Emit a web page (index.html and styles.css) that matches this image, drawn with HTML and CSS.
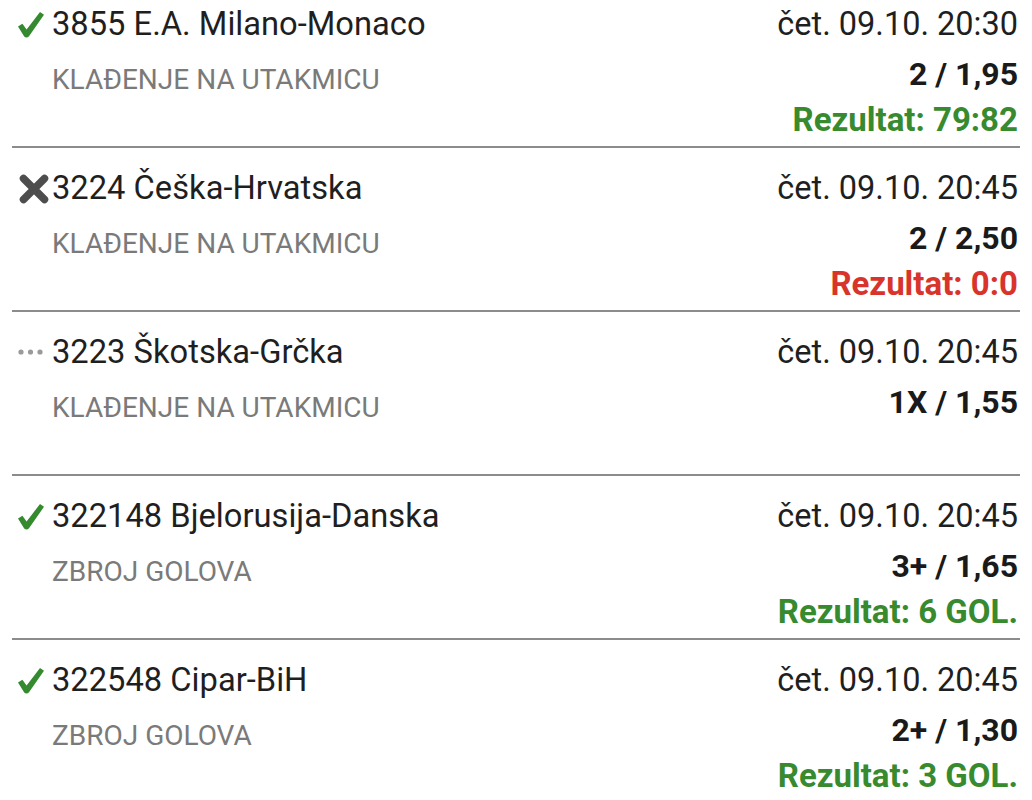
FILE: index.html
```html
<!DOCTYPE html>
<html lang="hr">
<head>
<meta charset="utf-8">
<title>Listić</title>
<link rel="stylesheet" href="styles.css">
</head>
<body>
<div class="list">

  <div class="row">
    <div class="left">
      <div class="title">
        <span class="icon"><svg class="ic-check" width="26" height="26" viewBox="0 0 26 26"><path d="M0 14.6 L4.4 11.8 L8.6 17.4 L22 0 L26 2.8 L11 24.2 Q8.6 26.8 6.2 24.4 Z" fill="#358a2f"/></svg></span>
        <span class="name">3855 E.A. Milano-Monaco</span>
      </div>
      <div class="sub">KLAĐENJE NA UTAKMICU</div>
    </div>
    <div class="right">
      <div class="date">čet. 09.10. 20:30</div>
      <div class="odds">2 / 1,95</div>
      <div class="res win">Rezultat: 79:82</div>
    </div>
  </div>
  <div class="divider"></div>

  <div class="row">
    <div class="left">
      <div class="title">
        <span class="icon"><svg class="ic-x" width="30" height="30" viewBox="0 0 30 30"><path d="M4.5 4.5 L25.5 25.5 M25.5 4.5 L4.5 25.5" stroke="#4d4d4d" stroke-width="7.5" stroke-linecap="round"/></svg></span>
        <span class="name">3224 Češka-Hrvatska</span>
      </div>
      <div class="sub">KLAĐENJE NA UTAKMICU</div>
    </div>
    <div class="right">
      <div class="date">čet. 09.10. 20:45</div>
      <div class="odds">2 / 2,50</div>
      <div class="res lose">Rezultat: 0:0</div>
    </div>
  </div>
  <div class="divider"></div>

  <div class="row">
    <div class="left">
      <div class="title">
        <span class="icon"><svg class="ic-dots" width="26" height="6" viewBox="0 0 26 6"><circle cx="3" cy="3" r="2.6" fill="#9a9a9a"/><circle cx="12.5" cy="3" r="2.6" fill="#9a9a9a"/><circle cx="22" cy="3" r="2.6" fill="#9a9a9a"/></svg></span>
        <span class="name">3223 Škotska-Grčka</span>
      </div>
      <div class="sub">KLAĐENJE NA UTAKMICU</div>
    </div>
    <div class="right">
      <div class="date">čet. 09.10. 20:45</div>
      <div class="odds">1X / 1,55</div>
    </div>
  </div>
  <div class="divider"></div>

  <div class="row">
    <div class="left">
      <div class="title">
        <span class="icon"><svg class="ic-check" width="26" height="26" viewBox="0 0 26 26"><path d="M0 14.6 L4.4 11.8 L8.6 17.4 L22 0 L26 2.8 L11 24.2 Q8.6 26.8 6.2 24.4 Z" fill="#358a2f"/></svg></span>
        <span class="name">322148 Bjelorusija-Danska</span>
      </div>
      <div class="sub">ZBROJ GOLOVA</div>
    </div>
    <div class="right">
      <div class="date">čet. 09.10. 20:45</div>
      <div class="odds">3+ / 1,65</div>
      <div class="res win">Rezultat: 6 GOL.</div>
    </div>
  </div>
  <div class="divider"></div>

  <div class="row">
    <div class="left">
      <div class="title">
        <span class="icon"><svg class="ic-check" width="26" height="26" viewBox="0 0 26 26"><path d="M0 14.6 L4.4 11.8 L8.6 17.4 L22 0 L26 2.8 L11 24.2 Q8.6 26.8 6.2 24.4 Z" fill="#358a2f"/></svg></span>
        <span class="name">322548 Cipar-BiH</span>
      </div>
      <div class="sub">ZBROJ GOLOVA</div>
    </div>
    <div class="right">
      <div class="date">čet. 09.10. 20:45</div>
      <div class="odds">2+ / 1,30</div>
      <div class="res win">Rezultat: 3 GOL.</div>
    </div>
  </div>

</div>
</body>
</html>
```

FILE: styles.css
```css
html, body {
  margin: 0;
  padding: 0;
  background: #ffffff;
}

body {
  font-family: Roboto, "Noto Sans", "Liberation Sans", sans-serif;
  color: #212121;
  overflow: hidden;
}

.list {
  margin-top: -16px;
  padding: 0 12px;
}

.row {
  box-sizing: border-box;
  height: 162px;
  padding-top: 20px;
  display: flex;
  justify-content: space-between;
}

.divider {
  height: 2px;
  background: #8c8c8c;
}

.left {
  display: flex;
  flex-direction: column;
}

.title {
  display: flex;
  align-items: center;
  height: 40px;
}

.icon {
  width: 40px;
  height: 40px;
  display: flex;
  align-items: center;
  flex-shrink: 0;
}

.ic-check {
  margin-left: 6px;
  margin-top: 1px;
}

.ic-x {
  margin-left: 7px;
  margin-top: 2px;
}

.ic-dots {
  margin-left: 6px;
}

.name {
  font-size: 32.7px;
  line-height: 40px;
  color: #1f1f1f;
  white-space: nowrap;
}

.sub {
  margin-top: 18px;
  padding-left: 40px;
  font-size: 28px;
  line-height: 36px;
  color: #7a7a7a;
  white-space: nowrap;
}

.right {
  display: flex;
  flex-direction: column;
  align-items: flex-end;
  padding-right: 2px;
}

.date {
  font-size: 32.5px;
  line-height: 40px;
  color: #1f1f1f;
  white-space: nowrap;
}

.odds {
  margin-top: 10px;
  font-size: 32px;
  line-height: 40px;
  font-weight: 700;
  color: #1a1a1a;
  white-space: nowrap;
}

.res {
  margin-top: 8px;
  font-size: 33px;
  line-height: 36px;
  font-weight: 700;
  white-space: nowrap;
}

.res.win {
  color: #388a2e;
}

.res.lose {
  color: #d8342c;
}
```
